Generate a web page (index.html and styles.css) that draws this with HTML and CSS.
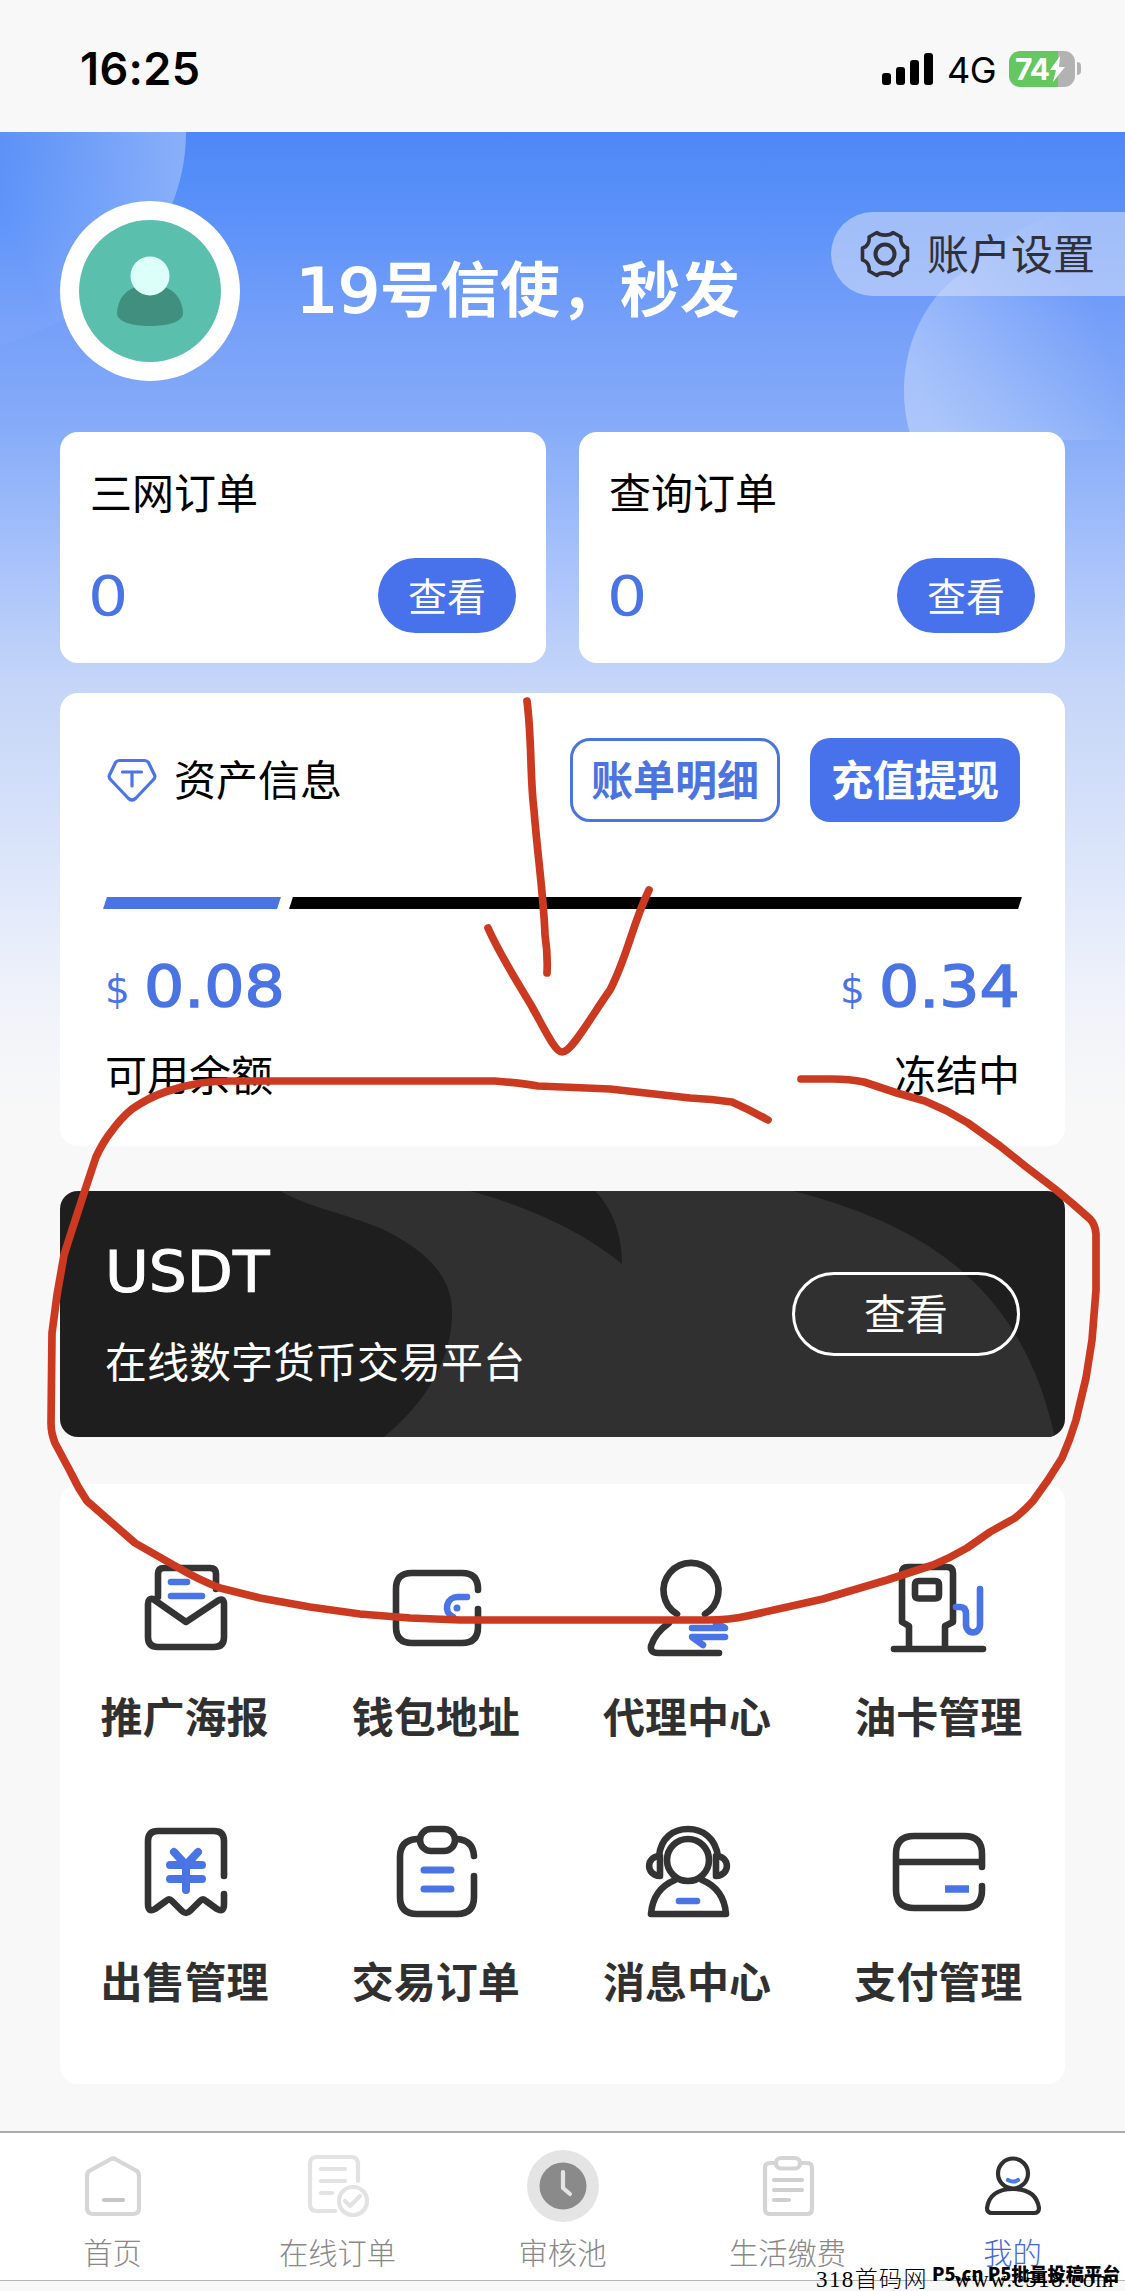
FILE: index.html
```html
<!DOCTYPE html>
<html lang="zh-CN">
<head>
<meta charset="utf-8">
<title>我的</title>
<link rel="stylesheet" href="styles.css">
</head>
<body>
<div class="page">
  <header class="status">
    <span class="time">16:25</span>
    <div class="status-right">
      <svg class="signal" width="51" height="32" viewBox="0 0 51 32"><rect x="0" y="20" width="9" height="12" rx="3"/><rect x="14" y="14" width="9" height="18" rx="3"/><rect x="28" y="7" width="9" height="25" rx="3"/><rect x="42" y="0" width="9" height="32" rx="3"/></svg>
      <span class="net">4G</span>
      <div class="battery"><span class="level">74</span><svg width="17" height="26" viewBox="0 0 17 26"><path d="M11 0 1 14h6L4 26 16 11h-6z" fill="#fff"/></svg></div>
      <i class="nub"></i>
    </div>
  </header>

  <main class="main">
    <svg class="decor" width="1125" height="600" viewBox="0 132 1125 600">
      <defs>
        <linearGradient id="gl" x1="0" y1=".6" x2="1" y2=".1"><stop offset=".1" stop-color="#fff" stop-opacity=".03"/><stop offset="1" stop-color="#fff" stop-opacity=".32"/></linearGradient>
        <linearGradient id="gr" x1="0" y1=".6" x2=".8" y2=".3"><stop offset="0" stop-color="#fff" stop-opacity=".32"/><stop offset="1" stop-color="#fff" stop-opacity="0"/></linearGradient>
      </defs>
      <path d="M0 132H186C186 225 120 310 0 345Z" fill="url(#gl)"/>
      <path d="M1125 180C1070 200 1000 235 942 290C905 330 895 390 912 440H1125Z" fill="url(#gr)"/>
    </svg>

    <section class="profile">
      <svg class="avatar" width="180" height="180" viewBox="0 0 180 180"><circle cx="90" cy="90" r="90" fill="#fff"/><circle cx="90" cy="90" r="71" fill="#5bbfae"/><path d="M57 112C58 94 70 84 90 84s32 10 33 28c0 9-15 13-33 13s-33-4-33-13z" fill="#41907f"/><circle cx="90" cy="75" r="19.5" fill="#dcfffa"/></svg>
      <h1 class="name"><span class="digits">19</span>号信使，秒发</h1>
      <div class="settings">
        <svg width="50" height="50" viewBox="0 0 50 50" fill="none" stroke="#303138" stroke-width="3.6" stroke-linejoin="round"><path d="M17 3.500C20 7 30 7 33 3.500L41 8C40 13 43 18 47.500 19V31C43 32 40 37 41 42L33 46.500C30 43 20 43 17 46.500L9 42C10 37 7 32 2.500 31V19C7 18 10 13 9 8Z"/><circle cx="25" cy="25" r="9.500" stroke-width="4"/></svg>
        <span>账户设置</span>
      </div>
    </section>

    <section class="orders">
      <div class="order"><h2>三网订单</h2><div class="order-row"><span class="count">0</span><a class="pill">查看</a></div></div>
      <div class="order"><h2>查询订单</h2><div class="order-row"><span class="count">0</span><a class="pill">查看</a></div></div>
    </section>

    <section class="assets">
      <div class="assets-head">
        <svg width="50" height="44" viewBox="0 0 50 44" fill="none" stroke="#4b74e8" stroke-width="3.200" stroke-linejoin="round" stroke-linecap="round"><path d="M12.500 2.500H37.500Q40 2.500 41.500 4.500L47 16Q49 19 46.500 21.500L29 40Q25 44 21 40L3.500 21.500Q1 19 3 16L8.500 4.500Q10 2.500 12.500 2.500Z"/><path d="M15.500 14H34.500M25 14V28"/></svg>
        <h2>资产信息</h2>
        <a class="btn outline">账单明细</a>
        <a class="btn solid">充值提现</a>
      </div>
      <div class="bar"><i class="free"></i><i class="frozen"></i></div>
      <div class="amounts">
        <div class="amount"><span class="cur">$</span><b class="num">0.08</b></div>
        <div class="amount"><span class="cur">$</span><b class="num">0.34</b></div>
      </div>
      <div class="captions"><span>可用余额</span><span>冻结中</span></div>
    </section>

    <section class="banner">
      <svg class="banner-art" width="1005" height="246" viewBox="0 0 1005 246"><path d="M220 0C250 17 290 24 320 37C365 58 392 85 392 120C393 165 368 210 324 246H995C985 205 975 175 951 136C910 75 850 30 733 0Z" fill="#303030"/><path d="M410 0C470 16 525 42 562 73C562 48 555 20 535 0Z" fill="#1e1e1e"/></svg>
      <div class="banner-text"><h2>USDT</h2><p>在线数字货币交易平台</p></div>
      <a class="ghost">查看</a>
    </section>

    <section class="menu">
      <div class="item"><svg viewBox="0 0 100 100"><path d="M22 42V19Q22 13 28 13H74Q80 13 80 19V34M17 44Q12 43 12 49V82Q12 92 22 92H78Q88 92 88 82V49Q88 43 83 45L50 67Z"/><path class="blue" d="M35 27H51M35 41H66"/></svg><span>推广海报</span></div>
      <div class="item"><svg viewBox="0 0 100 100"><path d="M91 35V34Q91 18 75 18H25Q9 18 9 34V72Q9 88 25 88H75Q91 88 91 72V54"/><path class="blue" d="M80 42H71A10.500 10.500 0 0 0 66 62"/><circle cx="70" cy="53" r="3.500" class="dot"/></svg><span>钱包地址</span></div>
      <div class="item"><svg viewBox="0 0 100 100"><path d="M39 59A27.500 27.500 0 1 1 67 59M31 68Q17 78 13 91Q12 98 20 98H81"/><path class="blue" d="M54 73H87L78 68M87 82H54L65 90"/></svg><span>代理中心</span></div>
      <div class="item"><svg viewBox="0 0 100 100"><path d="M20 94V71L13 67V18Q13 12 19 12H58Q64 12 64 18V67L56 71V94M5 94H94M30 26H46Q50 26 50 30V40Q50 43.500 46 43.500H30Q26 43.500 26 40V30Q26 26 30 26Z"/><path class="blue" d="M67 52H71Q77 52 77 59V70A7 7.500 0 0 0 91 70V34"/></svg><span>油卡管理</span></div>
      <div class="item"><svg viewBox="0 0 100 100"><path d="M88 56V21Q88 11 78 11H22Q12 11 12 21V84Q12 93 19 89L30 81Q33 78 36 81L46 91Q50 95 54 91L64 81Q67 78 70 81L81 89Q88 93 88 84V74"/><path class="blue yen" d="M38 32 50 45 62 32M34 45H66M34 59H66M50 45V70"/></svg><span>出售管理</span></div>
      <div class="item"><svg viewBox="0 0 100 100"><path d="M30 19Q13 20 13 37V77Q13 94 30 94H70Q87 94 87 77V56M70 19Q86 20 87 36"/><rect x="33" y="9" width="35" height="22" rx="11"/><path class="blue thick" d="M37 50H64M37 69H64"/></svg><span>交易订单</span></div>
      <div class="item"><svg viewBox="0 0 100 100"><circle cx="50" cy="40" r="21"/><path d="M21 36C23 18 35 9 50 9S77 18 80 36M22 36V56C7 55 8 36 22 36ZM78 36V56C93 55 92 36 78 36ZM37 60Q15 69 13 94H88Q86 69 64 60"/><path class="blue" d="M41 81H59"/></svg><span>消息中心</span></div>
      <div class="item"><svg viewBox="0 0 100 100"><path d="M93 47V34Q93 16 75 16H25Q7 16 7 34V70Q7 88 25 88H75Q93 88 93 70V66M7 42H93"/><path class="blue bar-mark" d="M56 69H80"/></svg><span>支付管理</span></div>
    </section>
  </main>

  <nav class="tabs">
    <a class="tab"><svg viewBox="0 0 72 72" stroke="#d6d6d6"><path d="M33 9.500Q36 7.500 39 9.500L59 20.500Q62 22 62 26V58Q62 64 56 64H16Q10 64 10 58V26Q10 22 13 20.500Z"/><path d="M27 50H46" stroke="#c6c6c6"/></svg><span>首页</span></a>
    <a class="tab"><svg viewBox="0 0 72 72" stroke="#e2e2e2"><path d="M56 31V14Q56 7 49 7H15Q8 7 8 14V54Q8 61 15 61H33M19 19H43M19 31H43M19 43H30"/><circle cx="51" cy="51" r="14"/><path d="M43 51 48 56 58 46"/></svg><span>在线订单</span></a>
    <a class="tab"><svg viewBox="0 0 72 72"><circle cx="36" cy="36" r="36" fill="#e4e4e4"/><circle cx="36" cy="36" r="23.500" fill="#8a8a8a"/><path d="M36 22V38L43 44" stroke="#e4e4e4"/></svg><span>审核池</span></a>
    <a class="tab"><svg viewBox="0 0 72 72" stroke="#d4d4d4"><path d="M24 13H18Q13 13 13 18V59Q13 64 18 64H55Q60 64 60 59V18Q60 13 55 13H48"/><rect x="24" y="8" width="24" height="10.500" rx="5"/><path d="M22 30H50M22 40H50M22 50H37" stroke="#cfcfcf"/></svg><span>生活缴费</span></a>
    <a class="tab active"><svg viewBox="0 0 72 72" stroke="#303030"><circle cx="36" cy="23.500" r="15"/><path d="M10 58C12 44 22 39 36 39S60 44 62 58Q62 63 57 63H15Q10 63 10 58Z"/><path d="M31 30Q36 33 41 30" stroke="#4a7be8"/></svg><span>我的</span></a>
  </nav>
  <div class="foot"></div>

  <svg class="ink" width="1125" height="2291" viewBox="0 0 1125 2291">
    <path d="M527 701C532 740 530 780 534 810C537 850 544 900 545 935Q548 955 547 973"/>
    <path d="M488 928C500 955 515 978 531 1005C545 1030 555 1052 562 1052C572 1052 590 1018 610 990C628 955 632 925 649 890"/>
    <path d="M801 1079H832Q850 1079 864 1082L897 1093 925 1101 947 1111 968 1123 1000 1146 1025 1166 1055 1189 1073 1204 1090 1219Q1095 1224 1096 1234V1290L1092 1340 1086 1378 1076 1420Q1070 1440 1062 1458L1048 1480 1033 1501Q1025 1510 1015 1518L990 1532 967 1548Q950 1558 933 1565L887 1580 823 1599 747 1616Q730 1620 707 1620H460L410 1618 360 1614 310 1607 260 1598 220 1588Q197 1579 177 1567L135 1543 87 1501Q78 1488 71 1473L55 1443Q51 1433 51 1423L52 1333 57 1295 64 1255 72 1230 86 1187 96 1157Q103 1142 111 1132Q121 1118 132 1109Q148 1098 165 1092Q182 1086 200 1083Q215 1081 230 1081H495Q520 1083 538 1086L610 1089 690 1098Q712 1099 732 1102Q750 1110 768 1120"/>
  </svg>
  <div class="mark serif"><span>318首码网</span><span>www.c518.com</span></div>
  <div class="mark heavy">P5.cn P5批量投稿平台</div>
</div>
</body>
</html>
```
FILE: styles.css
```css
* { box-sizing: border-box; }
body { margin: 0; background: #f8f8f8; font-family: "Noto Sans CJK SC", sans-serif; color: #000; }
h1, h2, p { margin: 0; font-weight: 400; }
svg { display: block; flex: none; }
.page { position: relative; width: 1125px; height: 2291px; overflow: hidden; display: flex; flex-direction: column; }

.status { height: 132px; padding: 5px 44px 0 80px; display: flex; align-items: center; justify-content: space-between; }
.time { font: 600 45px/60px Inter, sans-serif; letter-spacing: .4px; }
.status-right { display: flex; align-items: center; }
.net { font: 400 36px/40px Inter, sans-serif; margin: 2px 13px 0 14px; letter-spacing: -.6px; }
.battery { width: 66px; height: 36px; border-radius: 11px; background: linear-gradient(90deg, #65c760 49px, #b2b2b2 49px); display: flex; align-items: center; padding-left: 6px; }
.level { font: 700 30px/36px Inter, sans-serif; color: #fff; letter-spacing: -1px; }
.nub { width: 4px; height: 13px; margin-left: 2px; border-radius: 0 4px 4px 0; background: #b2b2b2; }

.main { position: relative; height: 1999px; padding: 68px 60px 0; background: linear-gradient(180deg, #4f88f6 0, #5a91f9 80px, #759ff9 190px, #85abf8 290px, #a8c2fb 430px, #c4d5f8 550px, #dde6fa 740px, #eff2fa 860px, #f8f8f8 980px); }
.decor { position: absolute; left: 0; top: 0; }
.profile, .orders, .assets, .menu { position: relative; }
.profile { display: flex; height: 232px; align-items: flex-start; margin-right: -60px; }
.avatar { margin-top: 1px; }
.name { margin: 41px 0 0 56px; font-size: 60px; line-height: 90px; font-weight: 700; color: #fff; white-space: nowrap; width: 535px; }
.digits { display: inline-block; width: 84px; font-family: "DejaVu Sans", sans-serif; font-weight: 400; -webkit-text-stroke: 2px #fff; transform: scaleX(1.1); transform-origin: 0 50%; }
.settings { width: 294px; height: 84px; margin-top: 12px; border-radius: 42px 0 0 42px; background: rgba(215, 224, 250, .56); display: flex; align-items: center; padding-left: 29px; gap: 17px; color: #303138; font-size: 42px; line-height: 60px; }
.settings span { padding-bottom: 5px; }

.orders { display: flex; gap: 33px; }
.order { flex: 1; height: 231px; border-radius: 18px; background: #fff; padding: 29px 30px 0 30px; }
.order h2, .assets h2 { font-size: 42px; line-height: 60px; }
.order-row { display: flex; align-items: center; justify-content: space-between; margin-top: 37px; }
.count { font: 56px/60px "DejaVu Sans", sans-serif; color: #4a73e6; margin-left: -2px; transform: scaleX(1.13); transform-origin: 0 50%; }
.pill { width: 138px; height: 75px; border-radius: 38px; background: #4872eb; color: #fff; font-size: 39px; line-height: 72px; text-align: center; }

.assets { height: 453px; margin-top: 30px; padding: 45px 45px 0; border-radius: 18px; background: #fff; }
.assets-head { display: flex; align-items: center; height: 84px; }
.assets-head svg { margin-left: 2px; }
.assets-head h2 { margin-left: 17px; margin-right: auto; padding-bottom: 5px; }
.btn { width: 210px; height: 84px; border-radius: 20px; font-size: 42px; font-weight: 700; line-height: 79px; text-align: center; }
.outline { border: 3px solid #4b74e0; color: #4b74e0; line-height: 73px; }
.solid { margin-left: 30px; background: #4872eb; color: #fff; }
.bar { display: flex; gap: 12px; height: 12px; margin: 75px 0 0 0; }
.bar i { transform: skewX(-18deg); }
.free { width: 174px; background: #4a73e4; }
.frozen { flex: 1; background: #000; }
.amounts { display: flex; justify-content: space-between; margin-top: 43px; color: #4a73e4; }
.amount { display: flex; width: 180px; height: 70px; line-height: 70px; font-family: "DejaVu Sans", sans-serif; }
.cur { font-size: 39px; line-height: 76px; width: 39px; padding-left: 0; }
.num { font-size: 57px; font-weight: 400; -webkit-text-stroke: 1.5px #4a73e4; transform: scaleX(1.11); transform-origin: 0 50%; }
.captions { display: flex; justify-content: space-between; margin-top: 21px; font-size: 42px; line-height: 60px; }

.banner { position: relative; height: 246px; margin-top: 45px; padding: 0 45px; border-radius: 18px; overflow: hidden; background: #1e1e1e; color: #fff; display: flex; align-items: center; justify-content: space-between; }
.banner-art { position: absolute; left: 0; top: 0; }
.banner-text, .ghost { position: relative; }
.banner-text h2 { font: 57px/66px "DejaVu Sans", sans-serif; -webkit-text-stroke: 1px #fff; margin-top: 1px; transform: scaleX(1.05); transform-origin: 0 50%; }
.banner-text p { font-size: 42px; line-height: 60px; margin-top: 25px; }
.ghost { width: 228px; height: 84px; border: 3px solid #fff; border-radius: 42px; font-size: 42px; line-height: 74px; text-align: center; }

.menu { height: 600px; margin-top: 47px; padding-top: 71px; border-radius: 18px; background: #fff; display: grid; grid-template-columns: repeat(4, 1fr); grid-auto-rows: 193px; row-gap: 72px; }
.item { display: flex; flex-direction: column; align-items: center; color: #303030; font-size: 42px; font-weight: 700; line-height: 60px; }
.item svg { width: 100px; height: 100px; margin-bottom: 30px; overflow: visible; fill: none; stroke: #333; stroke-width: 6.6; stroke-linecap: round; stroke-linejoin: round; }
.item span { margin-left: -2px; }
.item .blue { stroke: #4a74e6; }
.item .yen { stroke-width: 8; }
.item .thick { stroke-width: 7; }
.item .bar-mark { stroke-width: 7.5; stroke-linecap: butt; }
.item .dot { fill: #4a74e6; stroke: none; }

.tabs { height: 149px; border-top: 2px solid #ababab; background: #fff; display: grid; grid-template-columns: repeat(5, 1fr); }
.tab { display: flex; flex-direction: column; align-items: center; padding-top: 17px; color: #888; font-size: 29.3px; line-height: 40px; font-weight: 300; }
.tab svg { width: 72px; height: 72px; margin-bottom: 9px; fill: none; stroke-width: 4.2; stroke-linecap: round; stroke-linejoin: round; }
.active { color: #3f68dc; }
.foot { height: 11px; border-top: 1px solid #b5b5b5; }

.ink { position: absolute; left: 0; top: 0; fill: none; stroke: #cb3a20; stroke-width: 7.7; stroke-linecap: round; stroke-linejoin: round; }
.mark { position: absolute; white-space: nowrap; }
.serif { left: 816px; top: 2263px; display: flex; gap: 26px; font: 300 23px/34px "Liberation Serif", "Noto Sans CJK SC", serif; letter-spacing: 1.4px; }
.heavy { left: 932px; top: 2260px; font: 900 18.2px/26px "Noto Sans CJK SC", sans-serif; }
```
